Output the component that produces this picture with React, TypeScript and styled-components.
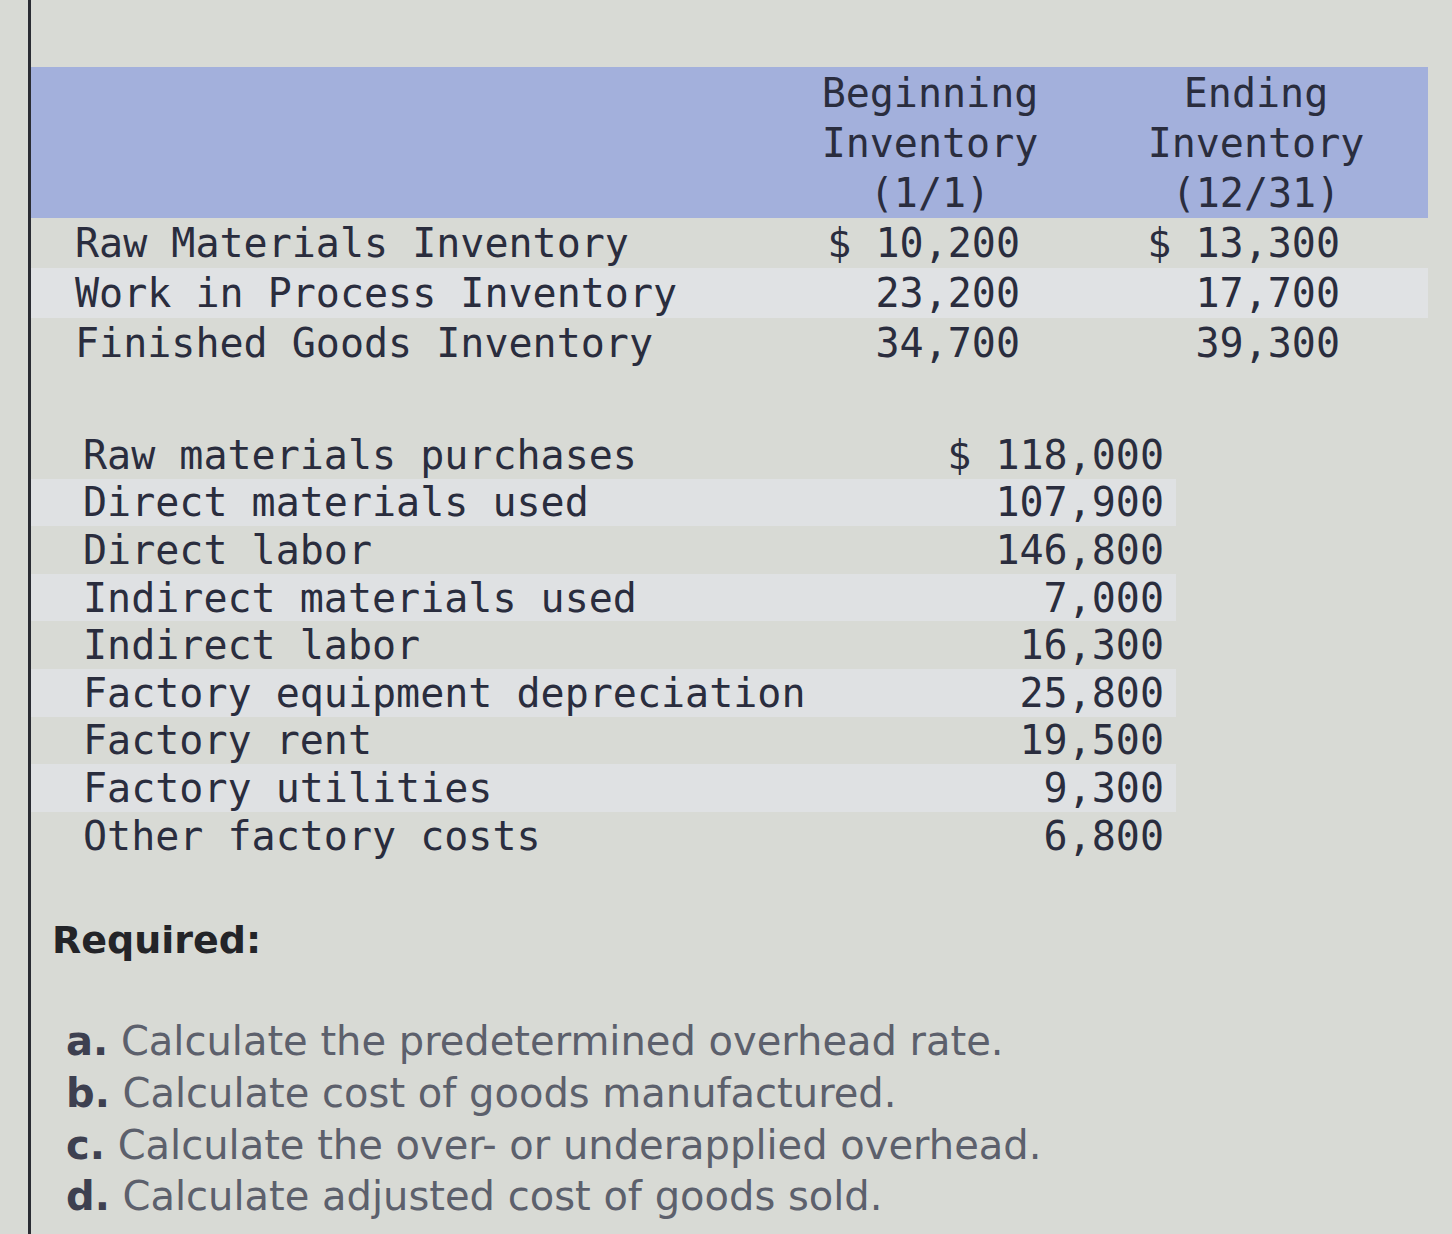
import styled, { createGlobalStyle } from "styled-components";

const GlobalStyle = createGlobalStyle`
  html, body {
    margin: 0;
    padding: 0;
    background: #d8dad5;
  }
`;

const mono = `"DejaVu Sans Mono", "Liberation Mono", monospace`;
const sans = `"DejaVu Sans", Verdana, sans-serif`;

const Page = styled.div`
  /* sheet with the dark rule on its left */
  margin-left: 28px;
  border-left: 3px solid #2a2c33;
  min-height: 1234px;
  box-sizing: border-box;
  padding-top: 67px;
  display: flex;
  flex-direction: column;
  color: #2a2d3e;
`;

const InventoryTable = styled.div`
  width: 1397px;
  display: flex;
  flex-direction: column;
  font-family: ${mono};
  font-size: 40px;
`;

const InvRow = styled.div<{ $shade?: "head" | "stripe" }>`
  display: grid;
  grid-template-columns: 789px 220px 106px 220px 1fr;
  height: ${(p) => (p.$shade === "head" ? "151px" : "50px")};
  align-items: center;
  background: ${(p) =>
    p.$shade === "head" ? "#a3b0dc" : p.$shade === "stripe" ? "#e0e2e4" : "transparent"};
`;

const Label = styled.div<{ $indent: number }>`
  padding-left: ${(p) => p.$indent}px;
  white-space: pre;
  line-height: 50px;
`;

const HeadCell = styled.div`
  text-align: center;
  line-height: 50px;
  white-space: pre-line;
`;

const Amount = styled.div<{ $pad: number }>`
  text-align: right;
  padding-right: ${(p) => p.$pad}px;
  white-space: pre;
  line-height: 50px;
`;

const CostTable = styled.div`
  margin-top: 63px;
  width: 1145px;
  display: flex;
  flex-direction: column;
  font-family: ${mono};
  font-size: 40px;
`;

const CostRow = styled.div<{ $stripe?: boolean }>`
  display: flex;
  justify-content: space-between;
  align-items: center;
  height: 47.6px;
  background: ${(p) => (p.$stripe ? "#dfe1e3" : "transparent")};
`;

const Required = styled.div`
  margin-top: 58px;
  padding-left: 21px;
  font-family: ${sans};
  font-weight: bold;
  font-size: 38px;
  line-height: 46px;
  color: #232428;
`;

const Tasks = styled.ol`
  list-style: none;
  margin: 53px 0 0;
  padding-left: 35px;
  font-family: ${sans};
  font-size: 40px;
  line-height: 51.7px;
  color: #5c606c;
`;

const Task = styled.li`
  white-space: nowrap;
`;

const TaskKey = styled.b`
  color: #3d4050;
`;

const inventories = [
  { label: "Raw Materials Inventory", begin: "$ 10,200", end: "$ 13,300" },
  { label: "Work in Process Inventory", begin: "23,200", end: "17,700" },
  { label: "Finished Goods Inventory", begin: "34,700", end: "39,300" },
];

const costs = [
  ["Raw materials purchases", "$ 118,000"],
  ["Direct materials used", "107,900"],
  ["Direct labor", "146,800"],
  ["Indirect materials used", "7,000"],
  ["Indirect labor", "16,300"],
  ["Factory equipment depreciation", "25,800"],
  ["Factory rent", "19,500"],
  ["Factory utilities", "9,300"],
  ["Other factory costs", "6,800"],
];

const tasks = [
  ["a.", "Calculate the predetermined overhead rate."],
  ["b.", "Calculate cost of goods manufactured."],
  ["c.", "Calculate the over- or underapplied overhead."],
  ["d.", "Calculate adjusted cost of goods sold."],
];

export default function App() {
  return (
    <>
      <GlobalStyle />
      <Page>
        <InventoryTable>
          <InvRow $shade="head">
            <div />
            <HeadCell>{"Beginning\nInventory\n(1/1)"}</HeadCell>
            <div />
            <HeadCell>{"Ending\nInventory\n(12/31)"}</HeadCell>
            <div />
          </InvRow>
          {inventories.map((r, i) => (
            <InvRow key={r.label} $shade={i === 1 ? "stripe" : undefined}>
              <Label $indent={44}>{r.label}</Label>
              <Amount $pad={20}>{r.begin}</Amount>
              <div />
              <Amount $pad={26}>{r.end}</Amount>
              <div />
            </InvRow>
          ))}
        </InventoryTable>

        <CostTable>
          {costs.map(([label, value], i) => (
            <CostRow key={label} $stripe={i % 2 === 1}>
              <Label $indent={52}>{label}</Label>
              <Amount $pad={12}>{value}</Amount>
            </CostRow>
          ))}
        </CostTable>

        <Required>Required:</Required>
        <Tasks>
          {tasks.map(([key, text]) => (
            <Task key={key}>
              <TaskKey>{key}</TaskKey> {text}
            </Task>
          ))}
        </Tasks>
      </Page>
    </>
  );
}
